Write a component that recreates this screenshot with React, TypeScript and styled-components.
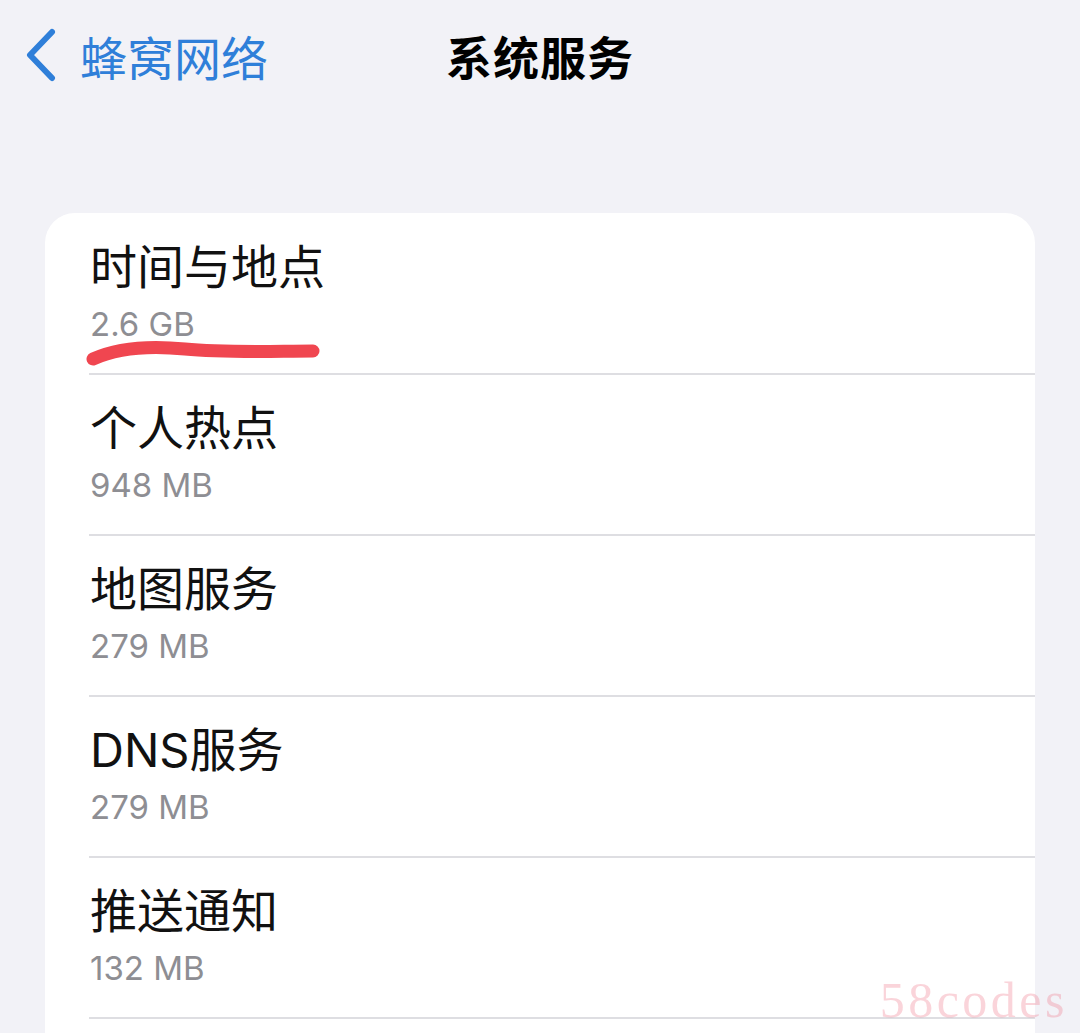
import React from "react";
import styled, { createGlobalStyle } from "styled-components";

const GlobalStyle = createGlobalStyle`
  html, body {
    margin: 0;
    padding: 0;
    background: #f2f2f7;
  }
  body {
    font-family: Inter, "Noto Sans CJK SC", sans-serif;
    overflow: hidden;
  }
`;

const Page = styled.div`
  position: relative;
  width: 1080px;
  height: 1033px;
  background: #f2f2f7;
  overflow: hidden;
`;

const NavBar = styled.header`
  position: relative;
  height: 110px;
  display: flex;
  align-items: center;
  justify-content: center;
`;

const BackButton = styled.div`
  position: absolute;
  left: 24px;
  top: 0;
  height: 110px;
  display: flex;
  align-items: center;
  gap: 22px;
  color: #2f7fd9;
  font-family: "Noto Sans CJK SC", sans-serif;
  font-size: 47px;
  font-weight: 400;
`;

const NavTitle = styled.h1`
  margin: 0;
  font-family: "Noto Sans CJK SC", sans-serif;
  font-size: 46px;
  font-weight: 700;
  color: #000;
  letter-spacing: 1px;
`;

const Card = styled.section`
  margin: 103px 45px 0 45px;
  background: #ffffff;
  border-radius: 30px;
  overflow: hidden;
`;

const Row = styled.div`
  position: relative;
  height: 160px;
  box-sizing: border-box;
  padding: 25px 0 0 45px;
  display: flex;
  flex-direction: column;
  gap: 8px;
  &:not(:first-child)::before {
    content: "";
    position: absolute;
    left: 44px;
    right: 0;
    top: -1px;
    height: 2px;
    background: #dedee2;
  }
  & + & {
    margin-top: 1px;
  }
`;

const RowTitle = styled.div`
  font-family: Inter, "Noto Sans CJK SC", sans-serif;
  font-size: 47px;
  line-height: 58px;
  color: #111;
`;

const RowSub = styled.div`
  font-family: Inter, "Noto Sans CJK SC", sans-serif;
  font-size: 33px;
  line-height: 40px;
  color: #8e8e93;
`;

const Scribble = styled.svg`
  position: absolute;
  left: 40px;
  top: 126px;
  overflow: visible;
`;

const Watermark = styled.div`
  position: absolute;
  right: 12px;
  bottom: 4px;
  font-family: "Liberation Serif", serif;
  font-size: 50px;
  letter-spacing: 3.5px;
  color: rgba(240, 120, 140, 0.32);
  pointer-events: none;
`;

const items = [
  { title: "时间与地点", sub: "2.6 GB", marked: true },
  { title: "个人热点", sub: "948 MB" },
  { title: "地图服务", sub: "279 MB" },
  { title: "DNS服务", sub: "279 MB" },
  { title: "推送通知", sub: "132 MB" },
  { title: "", sub: "" },
];

export default function App() {
  return (
    <Page>
      <GlobalStyle />
      <NavBar>
        <BackButton>
          <svg width="34" height="54" viewBox="0 0 34 54">
            <path
              d="M28 4 L6 27 L28 50"
              fill="none"
              stroke="#2f7fd9"
              strokeWidth="6"
              strokeLinecap="round"
              strokeLinejoin="round"
            />
          </svg>
          <span>蜂窝网络</span>
        </BackButton>
        <NavTitle>系统服务</NavTitle>
      </NavBar>
      <Card>
        {items.map((it, i) => (
          <Row key={i}>
            <RowTitle>{it.title}</RowTitle>
            <RowSub>{it.sub}</RowSub>
            {it.marked && (
              <Scribble width="240" height="30" viewBox="0 0 240 30">
                <path
                  d="M8 20 C 30 10, 60 6, 100 10 C 140 14, 190 12, 228 12"
                  fill="none"
                  stroke="#f04650"
                  strokeWidth="13"
                  strokeLinecap="round"
                />
              </Scribble>
            )}
          </Row>
        ))}
      </Card>
      <Watermark>58codes</Watermark>
    </Page>
  );
}
